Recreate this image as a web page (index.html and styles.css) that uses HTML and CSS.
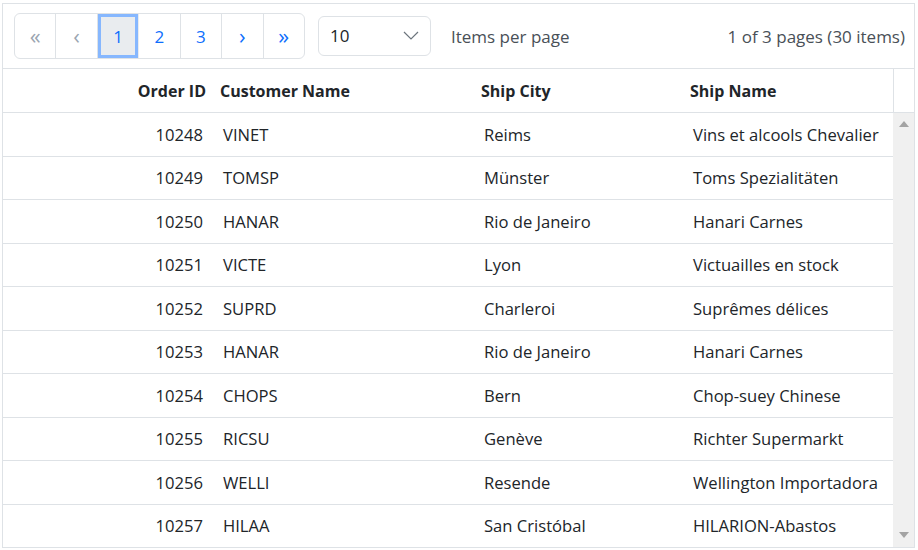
FILE: index.html
```html
<!DOCTYPE html>
<html>
<head>
<meta charset="utf-8">
<link rel="stylesheet" href="styles.css">
</head>
<body>
<div class="grid">
  <div class="pager">
    <div class="pages">
      <span class="pbtn dis arr">«</span>
      <span class="pbtn dis arr">‹</span>
      <span class="pbtn active">1</span>
      <span class="pbtn">2</span>
      <span class="pbtn">3</span>
      <span class="pbtn arr">›</span>
      <span class="pbtn arr">»</span>
    </div>
    <div class="select">
      <span>10</span>
      <svg width="16" height="9" viewBox="0 0 16 9"><path d="M1 1l7 7 7-7" fill="none" stroke="#6c757d" stroke-width="1.2"/></svg>
    </div>
    <span class="ipp">Items per page</span>
    <span class="info">1 of 3 pages (30 items)</span>
  </div>
  <div class="head">
    <div class="c c1">Order ID</div>
    <div class="c c2">Customer Name</div>
    <div class="c c3">Ship City</div>
    <div class="c c4">Ship Name</div>
    <div class="sbh"></div>
  </div>
  <div class="bodywrap">
    <div class="rows">
      <div class="row"><div class="c c1">10248</div><div class="c c2">VINET</div><div class="c c3">Reims</div><div class="c c4">Vins et alcools Chevalier</div></div>
      <div class="row"><div class="c c1">10249</div><div class="c c2">TOMSP</div><div class="c c3">Münster</div><div class="c c4">Toms Spezialitäten</div></div>
      <div class="row"><div class="c c1">10250</div><div class="c c2">HANAR</div><div class="c c3">Rio de Janeiro</div><div class="c c4">Hanari Carnes</div></div>
      <div class="row"><div class="c c1">10251</div><div class="c c2">VICTE</div><div class="c c3">Lyon</div><div class="c c4">Victuailles en stock</div></div>
      <div class="row"><div class="c c1">10252</div><div class="c c2">SUPRD</div><div class="c c3">Charleroi</div><div class="c c4">Suprêmes délices</div></div>
      <div class="row"><div class="c c1">10253</div><div class="c c2">HANAR</div><div class="c c3">Rio de Janeiro</div><div class="c c4">Hanari Carnes</div></div>
      <div class="row"><div class="c c1">10254</div><div class="c c2">CHOPS</div><div class="c c3">Bern</div><div class="c c4">Chop-suey Chinese</div></div>
      <div class="row"><div class="c c1">10255</div><div class="c c2">RICSU</div><div class="c c3">Genève</div><div class="c c4">Richter Supermarkt</div></div>
      <div class="row"><div class="c c1">10256</div><div class="c c2">WELLI</div><div class="c c3">Resende</div><div class="c c4">Wellington Importadora</div></div>
      <div class="row"><div class="c c1">10257</div><div class="c c2">HILAA</div><div class="c c3">San Cristóbal</div><div class="c c4">HILARION-Abastos</div></div>
    </div>
    <div class="sb">
      <svg width="10" height="6" viewBox="0 0 10 6"><path d="M0 6L5 0L10 6Z" fill="#a3a3a3"/></svg>
      <svg width="10" height="6" viewBox="0 0 10 6"><path d="M0 0L10 0L5 6Z" fill="#a3a3a3"/></svg>
    </div>
  </div>
</div>
</body>
</html>
```
FILE: styles.css
```css
* { box-sizing: border-box; }
body {
  margin: 0;
  padding: 3px 0 0 2px;
  font-family: "Open Sans", "Noto Sans", sans-serif;
  font-size: 16px;
  color: #212529;
  background: #fff;
}
.grid {
  width: 913px;
  height: 545px;
  border: 1px solid #dee2e6;
  display: flex;
  flex-direction: column;
}
.pager {
  height: 65px;
  flex: none;
  border-bottom: 1px solid #dee2e6;
  display: flex;
  align-items: center;
  padding: 0 9px 0 11px;
}
.pages {
  display: flex;
  width: 291px;
  height: 46px;
  border: 1px solid #dee2e6;
  border-radius: 6px;
  overflow: hidden;
}
.pbtn {
  flex: 1;
  display: flex;
  align-items: center;
  justify-content: center;
  color: #0d6efd;
  border-right: 1px solid #dee2e6;
  font-size: 17px;
}
.pbtn.arr { font-size: 22px; padding-bottom: 3px; }
.pbtn:last-child { border-right: none; }
.pbtn.dis { color: #9aa5b1; }
.pbtn.active {
  background: #e9ecef;
  box-shadow: inset 0 0 0 3px #86b7fe;
  border-right-color: transparent;
}
.select {
  margin-left: 13px;
  width: 113px;
  height: 40px;
  border: 1px solid #dee2e6;
  border-radius: 6px;
  display: flex;
  align-items: center;
  justify-content: space-between;
  padding: 0 11px 2px 11px;
  font-size: 17px;
}
.ipp {
  margin-left: 20px;
  color: #495057;
  font-size: 17px;
}
.info {
  margin-left: auto;
  color: #495057;
  font-size: 17px;
}
.head {
  height: 44px;
  flex: none;
  display: flex;
  border-bottom: 1px solid #dee2e6;
  font-weight: 700;
}
.head .c { padding: 0 7px; }
.c {
  display: flex;
  align-items: center;
  white-space: nowrap;
}
.c1 { width: 210px; justify-content: flex-end; }
.c2 { width: 261px; }
.c3 { width: 209px; }
.c4 { width: 210px; }
.sbh {
  flex: 1;
  border-left: 1px solid #dee2e6;
}
.bodywrap {
  flex: 1;
  display: flex;
  min-height: 0;
}
.rows {
  width: 890px;
  display: flex;
  flex-direction: column;
}
.row {
  height: 43.5px;
  flex: none;
  display: flex;
  border-bottom: 1px solid #dee2e6;
  font-size: 16.6px;
}
.row .c { padding: 0 10px; }
.sb {
  flex: 1;
  background: #f0f0f0;
  display: flex;
  flex-direction: column;
  justify-content: space-between;
  align-items: center;
  padding: 8px 0 9px 0;
}
```
